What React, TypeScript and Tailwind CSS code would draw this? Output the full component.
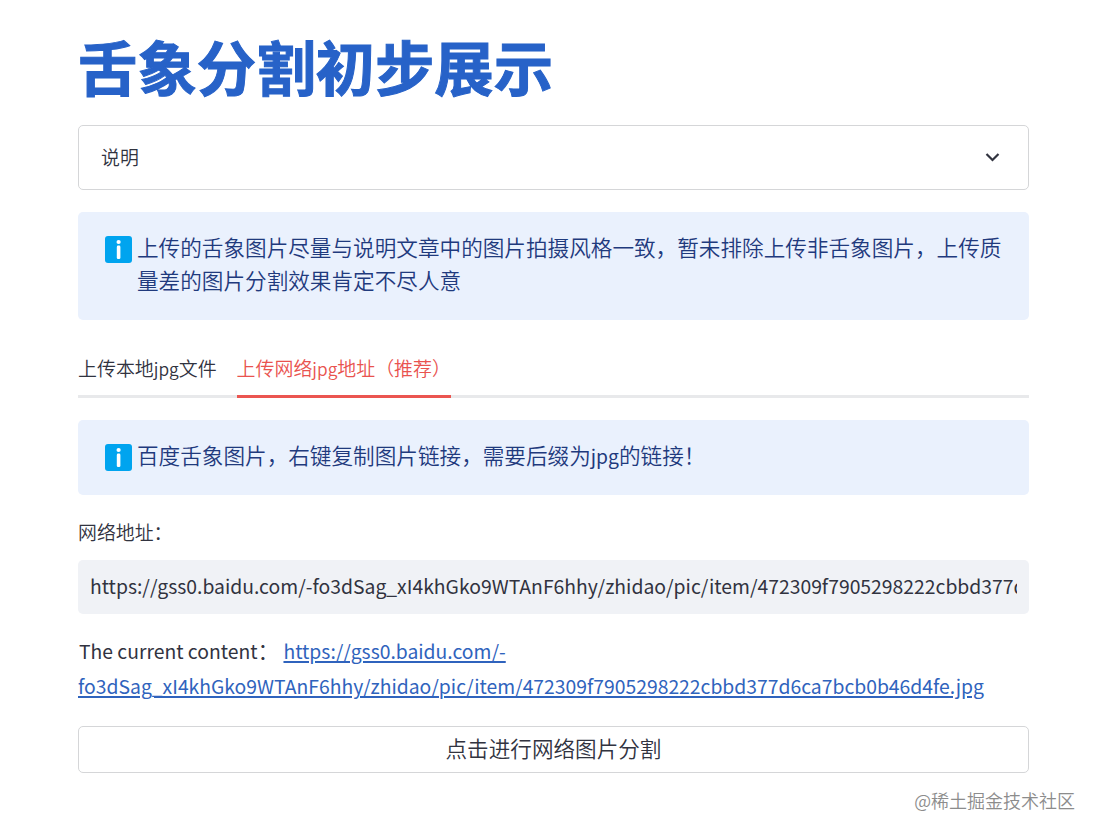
import type { ReactNode } from "react";

const ADDRESS_HOST = "https://gss0.baidu.com/-";
const ADDRESS_PATH =
  "fo3dSag_xI4khGko9WTAnF6hhy/zhidao/pic/item/472309f7905298222cbbd377d6ca7bcb0b46d4fe.jpg";

function InfoIcon() {
  return (
    <svg className="mt-[6px] size-[27px] shrink-0" viewBox="0 0 27 27" aria-hidden="true">
      <rect width="27" height="27" rx="3" fill="#00a4ef" />
      <circle cx="13.6" cy="6" r="2.1" fill="#fff" />
      <rect x="11.8" y="9.6" width="3.6" height="13.4" rx="1.3" fill="#fff" />
    </svg>
  );
}

function Notice({ children }: { children: ReactNode }) {
  return (
    <div className="flex gap-[5px] rounded-[5px] bg-[#eaf1fd] pt-[18px] pr-[21px] pb-[20px] pl-[27px] text-[21.61px] leading-[33px] font-[350] text-[#1f3a7d]">
      <InfoIcon />
      <p>{children}</p>
    </div>
  );
}

export default function App() {
  return (
    <main
      lang="zh-CN"
      className="flex h-[835px] w-[1098px] flex-col overflow-hidden bg-white pl-[78px] font-['Noto_Sans_CJK_SC',sans-serif] text-[#31333f]"
    >
      <div className="flex w-[951px] flex-col">
        <h1 className="h-[125px] pt-[30px] text-[59.4px] leading-[71px] font-bold text-[#2762c8] [-webkit-text-stroke:1px_#2762c8]">
          舌象分割初步展示
        </h1>

        <button className="flex h-[65px] items-center justify-between rounded-[5px] border border-[#d5d6d8] pr-[28px] pl-[22px] text-[18.9px] font-[350]">
          <span>说明</span>
          <svg className="mb-px h-[10px] w-[15px]" viewBox="0 0 15 10" fill="none" aria-hidden="true">
            <path d="M1.5 2 7.5 8l6-6" stroke="#31333f" strokeWidth="2.2" />
          </svg>
        </button>

        <div className="mt-[22px] flex h-[108px] flex-col *:flex-1">
          <Notice>
            上传的舌象图片尽量与说明文章中的图片拍摄风格一致，暂未排除上传非舌象图片，上传质量差的图片分割效果肯定不尽人意
          </Notice>
        </div>

        <div className="mt-[22px] flex h-[56px] gap-[20px] text-[18.95px] leading-[28px] font-[350] shadow-[inset_0_-3px_0_#e8e9eb]">
          <button className="flex pt-[12px]">
            <span>
              上传本地<span className="text-[17.3px]">jpg</span>文件
            </span>
          </button>
          <button className="flex border-b-[3px] border-[#eb5550] pt-[12px] text-[#e9534f]">
            <span>
              上传网络<span className="text-[17.3px]">jpg</span>地址（推荐）
            </span>
          </button>
        </div>

        <div className="mt-[22px] flex h-[75px] flex-col *:flex-1">
          <Notice>
            百度舌象图片，右键复制图片链接，需要后缀为
            <span className="text-[19.3px] font-normal">jpg</span>的链接！
          </Notice>
        </div>

        <label className="mt-[23px] h-[42px] text-[18.9px] leading-[27px] font-[350]">网络地址：</label>

        <div className="flex h-[54px] items-center rounded-[5px] bg-[#f0f2f6] px-[12px] pb-[2px]">
          <input
            className="w-full min-w-0 bg-transparent text-[19.35px] leading-[32px] outline-none"
            defaultValue={ADDRESS_HOST + ADDRESS_PATH}
          />
        </div>

        <p className="mt-[18px] h-[94px] pl-px text-[19.33px] leading-[35px]">
          The current content<span className="text-[21.6px] font-[350]">：</span>{" "}
          <a href="#" className="text-[#2f63bd] underline decoration-2 underline-offset-[2px]">
            {ADDRESS_HOST}
            <br />
            <span className="-ml-px">{ADDRESS_PATH}</span>
          </a>
        </p>

        <button className="h-[47px] rounded-[5px] border border-[#d5d6d8] pb-[5px] text-[21.6px] leading-[39px] font-[350]">
          点击进行网络图片分割
        </button>
      </div>

      <div className="mt-[14px] self-end pr-[23px] text-[18px] leading-[26px] font-[350] text-[#8c8c8c]">
        @稀土掘金技术社区
      </div>
    </main>
  );
}
